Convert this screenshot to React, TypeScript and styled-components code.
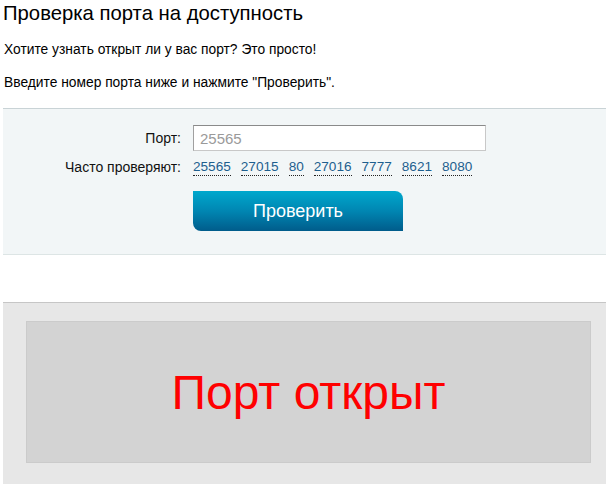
import React from 'react';
import styled, { createGlobalStyle } from 'styled-components';

const GlobalStyle = createGlobalStyle`
    body {
        margin: 0;
        background: #ffffff;
        font-family: "Liberation Sans", Arial, sans-serif;
        color: #000;
        overflow: hidden;
    }
`;

const Page = styled.div`
    width: 611px;
    padding-left: 3px;
`;

const Title = styled.h1`
    margin: 0;
    padding-top: 1px;
    font-size: 20.3px;
    font-weight: normal;
    line-height: 24px;
`;

const Text = styled.p`
    margin: 16px 0 0 1px;
    font-size: 13.8px;
    line-height: 17px;
`;

const CheckPanel = styled.div`
    margin-top: 17px;
    background: #f2f6f7;
    border-top: 1px solid #c9d3d6;
    border-bottom: 1px solid #dde5e5;
    padding: 16px 0 23px;
`;

const FormGrid = styled.div`
    display: grid;
    grid-template-columns: 178px auto;
    column-gap: 12px;
    row-gap: 7px;
    align-items: center;
`;

const Label = styled.div`
    text-align: right;
    font-size: 14px;
    color: #111;
`;

const PortInput = styled.input`
    box-sizing: border-box;
    width: 293px;
    height: 26px;
    border: 1px solid #c8c8c8;
    border-top-color: #8a8a8a;
    border-left-color: #a0a0a0;
    padding: 0 6px;
    font-family: "Liberation Sans", Arial, sans-serif;
    font-size: 15px;
    color: #333;
    background: #fff;
    outline: none;

    &::placeholder {
        color: #9a9a9a;
    }
`;

const Links = styled.div`
    display: flex;
    gap: 10px;
`;

const PortLink = styled.a`
    font-size: 13.6px;
    line-height: 17px;
    color: #1e5f8e;
    text-decoration: none;
    border-bottom: 1px dotted #222;
    cursor: pointer;
`;

const CheckButton = styled.button`
    grid-column: 2;
    margin-top: 8px;
    width: 210px;
    height: 40px;
    border: none;
    border-radius: 0 8px 0 8px;
    background: linear-gradient(to bottom, #00a8cd 0%, #0086b2 50%, #005c8b 100%);
    color: #fff;
    font-family: "Liberation Sans", Arial, sans-serif;
    font-size: 18px;
    cursor: pointer;
`;

const ResultPanel = styled.div`
    margin-top: 47px;
    background: #e7e7e7;
    border-top: 1px solid #c6c6c6;
    padding: 18px 23px 21px;
`;

const ResultBox = styled.div`
    height: 140px;
    background: #d3d3d3;
    border: 1px solid #cbcbcb;
    display: flex;
    align-items: center;
    justify-content: center;
`;

const ResultText = styled.span<{ open: boolean }>`
    font-size: 48px;
    color: ${(p) => (p.open ? '#ff0000' : '#008800')};
`;

const popular = ['25565', '27015', '80', '27016', '7777', '8621', '8080'];

const App: React.FC = () => {
    return (
        <>
            <GlobalStyle />
            <Page>
                <Title>Проверка порта на доступность</Title>
                <Text>Хотите узнать открыт ли у вас порт? Это просто!</Text>
                <Text>Введите номер порта ниже и нажмите "Проверить".</Text>

                <CheckPanel>
                    <FormGrid>
                        <Label>Порт:</Label>
                        <PortInput placeholder="25565" />
                        <Label>Часто проверяют:</Label>
                        <Links>
                            {popular.map((port) => (
                                <PortLink key={port}>{port}</PortLink>
                            ))}
                        </Links>
                        <CheckButton>Проверить</CheckButton>
                    </FormGrid>
                </CheckPanel>

                <ResultPanel>
                    <ResultBox>
                        <ResultText open>Порт открыт</ResultText>
                    </ResultBox>
                </ResultPanel>
            </Page>
        </>
    );
};

export default App;
